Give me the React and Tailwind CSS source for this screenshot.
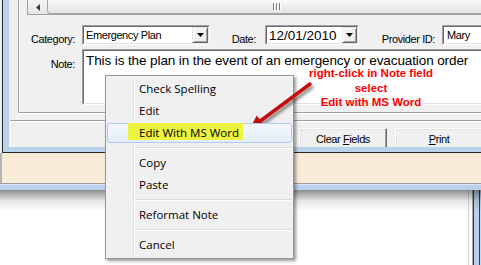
import React from "react";

function Sunken({ className = "", innerClassName = "", children }) {
  return (
    <div className={`shrink-0 border border-t-[#a0a0a0] border-l-[#a0a0a0] border-b-white border-r-white ${className}`}>
      <div className={`h-full overflow-hidden border border-t-[#696969] border-l-[#696969] border-b-[#e3e3e3] border-r-[#e3e3e3] bg-white ${innerClassName}`}>
        {children}
      </div>
    </div>
  );
}

function DropBtn({ className = "" }) {
  return (
    <div className={`flex h-full shrink-0 items-center justify-center border border-t-[#e3e3e3] border-l-[#e3e3e3] border-b-[#696969] border-r-[#696969] bg-[#f0f0f0] shadow-[inset_1px_1px_0_#fff,inset_-1px_-1px_0_#a0a0a0] ${className}`}>
      <svg width="7" height="4" viewBox="0 0 7 4">
        <polygon points="0,0 7,0 3.5,4" fill="#000" />
      </svg>
    </div>
  );
}

function Btn({ children }) {
  return (
    <div className="flex h-[22px] w-[88px] shrink-0 items-center justify-center border border-t-white border-l-white border-b-[#696969] border-r-[#696969] bg-[#f0f0f0] text-[11px] leading-[11px] tracking-[-0.4px] shadow-[inset_-1px_-1px_0_#a0a0a0,inset_1px_1px_0_#e3e3e3]">
      {children}
    </div>
  );
}

const items = [
  "Check Spelling",
  "Edit",
  "Edit With MS Word",
  "-",
  "Copy",
  "Paste",
  "-",
  "Reformat Note",
  "-",
  "Cancel",
];

export default function App() {
  return (
    <div className="relative flex h-[265px] w-[481px] flex-col overflow-hidden bg-white font-['Liberation_Sans',Arial,sans-serif] text-black">
      {/* main dialog window */}
      <div className="h-[153px] shrink-0 bg-[#e4ecf6] pl-[2px]">
        <div className="flex h-full flex-col border-b border-l border-[#262626] bg-[#b9d1ea] pb-[5px] pl-[6px]">
          <div className="flex min-h-0 flex-1 flex-col overflow-hidden bg-[#f0f0f0]">
            {/* group box */}
            <div className="ml-[9px] h-[113px] shrink-0 border-b border-l border-[#a0a0a0] shadow-[inset_1px_0_0_#fff,0_1px_0_#fff]">
              {/* scrollbar */}
              <div className="pl-[8px]">
                <div className="flex h-[15px] overflow-hidden border-b border-l border-[#a0a0a0]">
                  <div className="flex w-[19px] shrink-0 items-center justify-center bg-linear-to-b from-[#f4f4f4] to-[#e6e6e6]">
                    <svg width="4" height="7" viewBox="0 0 4 7">
                      <polygon points="4,0 4,7 0,3.5" fill="#3c3c3c" />
                    </svg>
                  </div>
                  <div className="flex w-[458px] shrink-0 justify-center gap-[1px] rounded-bl-[3px] border-b border-l border-[#a7a7a7] bg-linear-to-b from-[#fafafa] to-[#e3e3e3] pt-[3px]">
                    <span className="h-[7px] w-[2px] border-l border-r border-l-[#7c7c7c] border-r-white" />
                    <span className="h-[7px] w-[2px] border-l border-r border-l-[#7c7c7c] border-r-white" />
                    <span className="h-[7px] w-[2px] border-l border-r border-l-[#7c7c7c] border-r-white" />
                  </div>
                </div>
              </div>

              {/* row 1 */}
              <div className="mt-[10px] flex h-[20px] text-[11px] tracking-[-0.4px]">
                <div className="w-[56px] shrink-0 pt-[9px] text-right leading-[11px]">Category:</div>
                <Sunken className="ml-[7px] w-[128px]">
                  <div className="flex h-full">
                    <div className="flex flex-1 items-center pl-[2px] leading-[11px] whitespace-nowrap">Emergency Plan</div>
                    <DropBtn className="w-[16px]" />
                  </div>
                </Sunken>
                <div className="w-[46px] shrink-0 pt-[9px] text-right leading-[11px]">Date:</div>
                <Sunken className="ml-[9px] w-[94px]">
                  <div className="flex h-full">
                    <div className="flex flex-1 items-center pl-[2px] pt-[2px] text-[13.5px] leading-[13.5px] tracking-normal">12/01/2010</div>
                    <DropBtn className="w-[15px]" />
                  </div>
                </Sunken>
                <div className="w-[76px] shrink-0 pt-[9px] text-right leading-[11px] whitespace-nowrap">Provider ID:</div>
                <Sunken className="ml-[7px] w-[80px]">
                  <div className="flex h-full items-center pl-[3px] leading-[11px]">Mary</div>
                </Sunken>
              </div>

              {/* row 2 */}
              <div className="mt-[4px] flex h-[56px]">
                <div className="w-[56px] shrink-0 pt-[10px] text-right text-[11px] leading-[11px] tracking-[-0.4px]">Note:</div>
                <Sunken className="ml-[7px] w-[420px]">
                  <div className="whitespace-nowrap pl-[2px] pt-[3px] text-[13.5px] leading-[13px] tracking-[-0.1px]">
                    This is the plan in the event of an emergency or evacuation order
                  </div>
                </Sunken>
              </div>
            </div>

            {/* button bar */}
            <div className="ml-[1px] mt-[7px] flex flex-1 items-start gap-[8px] border-t border-[#a0a0a0] pl-[289px] pt-[7px] shadow-[inset_1px_1px_0_#fff]">
              <Btn>
                <span>
                  Clear <span className="underline underline-offset-[1px]">F</span>ields
                </span>
              </Btn>
              <Btn>
                <span>
                  <span className="underline underline-offset-[1px]">P</span>rint
                </span>
              </Btn>
            </div>
          </div>
        </div>
      </div>

      {/* window behind */}
      <div className="h-[30px] shrink-0 border-l-2 border-[#b5b5b5] bg-[#f8ebd7]" />
      <div className="h-px shrink-0 bg-[#9d9d9d]" />
      <div className="h-[6px] shrink-0 border-t border-[#dbe7f4] bg-[#b9d1ea]" />
      <div className="relative flex flex-1">
        <div className="flex-1 bg-white" />
        <div className="flex w-[13px] shrink-0">
          <div className="w-px bg-[#d5d5d5]" />
          <div className="w-[3px] bg-white" />
          <div className="w-px bg-[#a8a8a8]" />
          <div className="w-px bg-[#3b3b3b]" />
          <div className="w-[5px] bg-[#b9d1ea]" />
          <div className="w-px bg-[#3b3b3b]" />
          <div className="w-px bg-[#c7d9ee]" />
        </div>
        <div className="pointer-events-none absolute inset-x-0 top-0 h-[22px] bg-linear-to-b from-black/45 via-black/10 to-transparent" />
      </div>

      {/* context menu */}
      <div className="absolute left-[105px] top-[75px] w-[189px] border border-[#979797] bg-[#f0f0f0] px-[1px] py-[2px] font-['Open_Sans',sans-serif] text-[11.5px] shadow-[2px_2px_3px_rgba(0,0,0,0.4)]">
        <div className="absolute bottom-[2px] left-[27px] top-[2px] w-[2px] border-l border-r border-l-[#e2e3e3] border-r-white" />
        {items.map((it, i) =>
          it === "-" ? (
            <div key={i} className="flex h-[8px] items-center">
              <div className="ml-[28px] h-[2px] flex-1 border-t border-b border-t-[#dcdcdc] border-b-white" />
            </div>
          ) : i === 2 ? (
            <div key={i} className="h-[22px] py-[1px]">
              <div className="relative z-10 flex h-[20px] items-center rounded-[3px] border border-[#aecbf0] bg-linear-to-b from-[#f4f8fd] to-[#e4edf9] pl-[31px] leading-[11.5px]">
                <div className="absolute left-[20px] top-[-1px] h-[17px] w-[115px] bg-[#eef33f]" />
                <span className="relative">{it}</span>
              </div>
            </div>
          ) : (
            <div key={i} className="relative h-[22px] py-[1px]">
              <div className="flex h-[20px] items-center border border-transparent pl-[31px] leading-[11.5px]">{it}</div>
            </div>
          )
        )}
      </div>

      {/* annotation */}
      <div className="absolute left-[290px] top-[68px] flex w-[162px] flex-col items-center gap-[3.5px] text-[11.5px] font-bold leading-[11px] text-[#ff0000]">
        <div>right-click in Note field</div>
        <div>select</div>
        <div>Edit with MS Word</div>
      </div>

      <svg className="absolute left-[240px] top-[78px]" width="80" height="64" viewBox="240 78 80 64">
        <defs>
          <filter id="ashadow" x="-30%" y="-30%" width="160%" height="160%">
            <feDropShadow dx="2" dy="3" stdDeviation="1.5" floodColor="#000" floodOpacity="0.45" />
          </filter>
        </defs>
        <g filter="url(#ashadow)">
          <line x1="310" y1="84" x2="259" y2="122" stroke="#c41010" strokeWidth="3.5" strokeLinecap="round" />
          <polygon points="248,132 256.8,115.4 265.2,126.6" fill="#c41010" />
        </g>
      </svg>
    </div>
  );
}
